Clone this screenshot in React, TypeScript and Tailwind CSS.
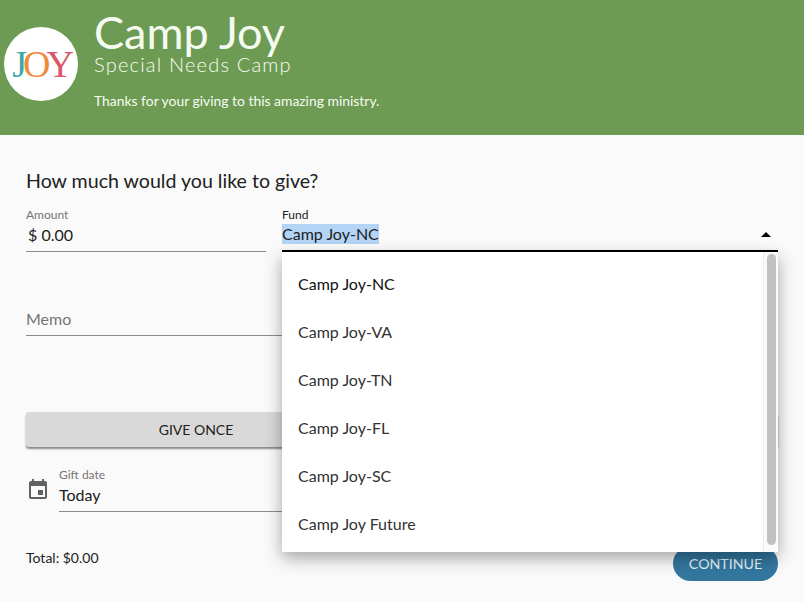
const funds = [
  "Camp Joy-NC",
  "Camp Joy-VA",
  "Camp Joy-TN",
  "Camp Joy-FL",
  "Camp Joy-SC",
  "Camp Joy Future",
];

function CalendarIcon() {
  return (
    <svg viewBox="0 0 24 24" className="h-6 w-6 fill-[#616161]">
      <path d="M17 12h-5v5h5v-5zM16 1v2H8V1H6v2H5c-1.11 0-1.99.9-1.99 2L3 19c0 1.1.89 2 2 2h14c1.1 0 2-.9 2-2V5c0-1.1-.9-2-2-2h-1V1h-2zm3 18H5V8h14v11z" />
    </svg>
  );
}

export default function App() {
  return (
    <div className="relative h-[602px] w-[804px] overflow-hidden bg-[#fafafa] font-['Lato',sans-serif] text-[#212121]">
      {/* HEADER */}
      <header className="flex h-[135px] items-start bg-[#6d9b53] pl-1">
        <div className="mt-[27px] flex h-[74px] w-[74px] items-center justify-center rounded-full bg-white font-['Liberation_Serif',serif] text-[38px] leading-none tracking-[-4px]">
          <span className="text-[#3fa6ad]">J</span>
          <span className="text-[#ee8a3a]">O</span>
          <span className="text-[#d9566b]">Y</span>
        </div>
        <div className="ml-4 flex flex-col text-[#f6fbf2]">
          <h1 className="mt-[11px] text-[45px] font-normal leading-[42px]">Camp Joy</h1>
          <p className="text-[20px] font-light leading-[22px] tracking-[1.2px]">Special Needs Camp</p>
          <p className="mt-[18px] text-[13.9px] leading-[16px]">Thanks for your giving to this amazing ministry.</p>
        </div>
      </header>

      {/* FORM */}
      <main className="px-[26px]">
        <h2 className="mt-[34px] text-[19.6px] leading-6">How much would you like to give?</h2>

        <div className="mt-[15px] grid grid-cols-[240px_496px] gap-x-4">
          <div className="h-[44px] border-b border-[#8a8a8a]">
            <div className="text-[12px] leading-[14px] text-[#757575]">Amount</div>
            <div className="mt-[1px] pl-[2px] text-[16px] leading-[24px]">$ 0.00</div>
          </div>
          <div className="h-[44px] border-b-2 border-black">
            <div className="text-[12px] leading-[14px]">Fund</div>
            <div className="mt-[2px] flex items-center justify-between">
              <span className="bg-[#b3d4f5] text-[16px] leading-[20px]">Camp Joy-NC</span>
              <span className="mr-[7px] h-0 w-0 border-x-[5px] border-b-[5px] border-x-transparent border-b-black" />
            </div>
          </div>
        </div>

        <div className="mt-[54px] flex h-[30px] w-[752px] items-start border-b border-[#8a8a8a] pt-[1px] text-[16px] leading-[24px] text-[#757575]">
          Memo
        </div>

        <div className="mt-[76px] flex h-[35px] w-[752px] rounded-[3px] bg-[#d9d9d9] text-[14px] shadow-[0_2px_2px_rgba(0,0,0,0.45)]">
          <div className="flex w-[340px] items-center justify-center">GIVE ONCE</div>
          <div className="flex-1 bg-[#efefef]" />
        </div>

        <div className="mt-[20px] flex items-center">
          <CalendarIcon />
          <div className="ml-[9px] h-[45px] w-[719px] border-b border-[#8a8a8a]">
            <div className="text-[12px] leading-[16px] text-[#757575]">Gift date</div>
            <div className="text-[16px] leading-[24px]">Today</div>
          </div>
        </div>

        <div className="mt-[35px] flex items-start justify-between">
          <div className="mt-[3px] text-[14px] leading-[16px]">Total: $0.00</div>
          <button className="mt-[-1px] h-[35px] w-[105px] rounded-full bg-[#33779f] pt-[1px] text-[14.2px] text-[#e4f4fb]">CONTINUE</button>
        </div>
      </main>

      {/* DROPDOWN */}
      <div className="absolute left-[282px] top-[252px] flex h-[300px] w-[496px] bg-white shadow-[0_6px_16px_rgba(0,0,0,0.35)]">
        <ul className="flex-1 py-2">
          {funds.map((fund, i) => (
            <li
              key={fund}
              className={`flex h-12 items-center pl-4 text-[16px] ${i === 0 ? "text-[#111111]" : "text-[#333333]"}`}
            >
              {fund}
            </li>
          ))}
        </ul>
        <div className="w-[15px] border-l border-[#ececec] bg-[#fafafa] px-[2.5px] py-[2px]">
          <div className="h-[291px] rounded-full bg-[#c1c1c1]" />
        </div>
      </div>
    </div>
  );
}
